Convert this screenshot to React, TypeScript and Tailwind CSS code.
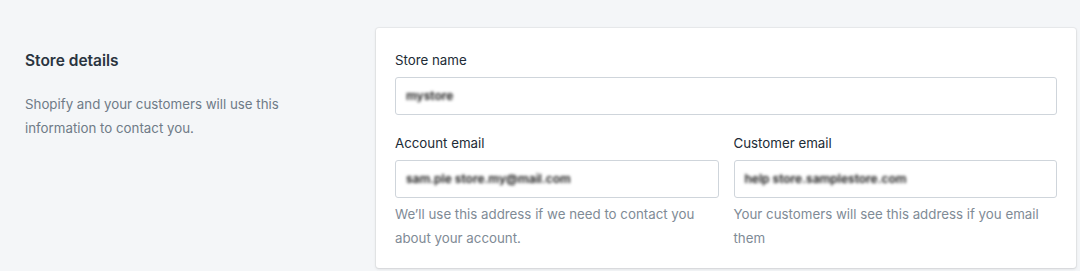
import React from 'react';

const font = { fontFamily: 'Inter, "Noto Sans", sans-serif' };

interface FieldProps {
  label: string;
  value: string;
  help?: string;
}

const Field: React.FC<FieldProps> = ({ label, value, help }) => (
  <div className="flex flex-col min-w-0 flex-1">
    <label className="text-[13.3px] leading-[24px] text-[#212b36]">{label}</label>
    <div className="mt-[5px] h-[38px] rounded-[3px] border border-[#cfd5db] bg-white flex items-center px-[10px]">
      {/* blurred value, as in the screenshot */}
      <span className="text-[12px] font-semibold text-[#111] blur-[1.4px] truncate">{value}</span>
    </div>
    {help && (
      <p className="mt-[4px] text-[13.3px] leading-[24px] text-[#7f8b96]">{help}</p>
    )}
  </div>
);

export default function App() {
  return (
    <div className="w-[1080px] h-[271px] bg-[#f4f6f8] overflow-hidden" style={font}>
      <div className="flex pt-[28px]">
        {/* annotation */}
        <div className="w-[376px] shrink-0 pl-[25px] pr-[20px] pt-[21px]">
          <h2 className="text-[15.5px] leading-[24px] font-semibold text-[#2a3440]">Store details</h2>
          <p className="mt-[19px] text-[13.3px] leading-[24px] text-[#6f7b87] w-[270px]">
            Shopify and your customers will use this information to contact you.
          </p>
        </div>

        {/* card */}
        <div className="w-[700px] bg-white rounded-[3px] shadow-[0_0_0_1px_rgba(63,63,68,0.05),0_1px_3px_0_rgba(63,63,68,0.15)] px-[19px] pt-[20px] pb-[18px]">
          <Field label="Store name" value="mystore" />
          <div className="flex gap-[15px] mt-[16px]">
            <Field
              label="Account email"
              value="sam.ple  store.my@mail.com"
              help="We’ll use this address if we need to contact you about your account."
            />
            <Field
              label="Customer email"
              value="help  store.samplestore.com"
              help="Your customers will see this address if you email them"
            />
          </div>
        </div>
      </div>
    </div>
  );
}
